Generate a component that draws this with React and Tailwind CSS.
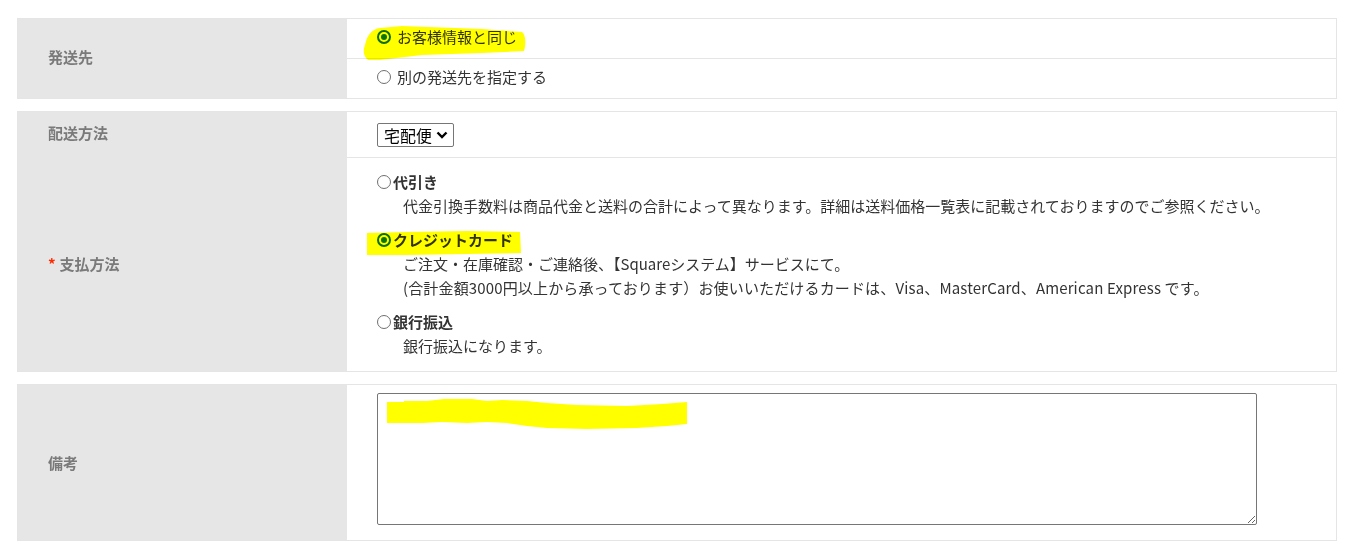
import React from "react";

const font = { fontFamily: '"Noto Sans CJK JP", "Noto Sans", sans-serif' };

function Radio({ checked }) {
  return checked ? (
    <span className="inline-flex h-[14px] w-[14px] shrink-0 items-center justify-center rounded-full border-2 border-[#0b6e0b] bg-[#ffff00]">
      <span className="h-[6px] w-[6px] rounded-full bg-[#0a750a]" />
    </span>
  ) : (
    <span className="inline-block h-[14px] w-[14px] shrink-0 rounded-full border border-[#6f6f6f] bg-white" />
  );
}

function Label({ children, required }) {
  return (
    <div className="flex items-center pl-[30px] text-[15px] font-bold text-[#7a7a7a]">
      {required && <span className="mr-[4px] text-[#ff2a00]">*</span>}
      {children}
    </div>
  );
}

export default function App() {
  return (
    <div className="min-h-[555px] bg-white pt-[18px] text-[15px] leading-[24px] text-[#333]" style={font}>
      <div className="ml-[17px] flex w-[1320px] flex-col gap-[12px]">
        {/* 発送先 */}
        <div className="flex border border-[#e5e5e5]">
          <div className="flex w-[329px] items-center bg-[#e6e6e6] pb-[3px]">
            <Label>発送先</Label>
          </div>
          <div className="relative flex flex-1 flex-col">
            <div className="flex h-[39px] items-center pb-[3px] pl-[30px]">
              <Radio checked />
              <span className="ml-[6px] text-[#333300]">お客様情報と同じ</span>
            </div>
            <div className="flex h-[40px] items-center border-t border-[#e5e5e5] pb-[3px] pl-[30px]">
              <Radio />
              <span className="ml-[6px]">別の発送先を指定する</span>
            </div>
            <svg className="pointer-events-none absolute left-[15px] top-[4px] mix-blend-multiply" width="166" height="40" viewBox="0 0 166 40">
              <path d="M3 22 C5 12 10 6 18 5 L40 3 L120 6 L160 9 C164 12 164 22 162 28 L120 30 L60 32 L18 37 L6 37 C1 33 1 27 3 22 Z" fill="#ffff00" />
            </svg>
          </div>
        </div>

        {/* 配送方法 / 支払方法 */}
        <div className="flex flex-col border border-[#e5e5e5]">
          <div className="flex">
            <div className="flex h-[45px] w-[329px] items-center bg-[#e6e6e6] pb-[4px]">
              <Label>配送方法</Label>
            </div>
            <div className="flex flex-1 items-center pl-[30px]">
              <div className="flex h-[24px] items-center rounded-[2px] border border-[#767676] bg-white pl-[6px] pr-[5px] text-[16px] leading-[20px] text-black">
                宅配便
                <svg className="ml-[4px]" width="12" height="12" viewBox="0 0 12 12">
                  <path d="M1.5 3.5 L6 8 L10.5 3.5" fill="none" stroke="#000" strokeWidth="2.4" />
                </svg>
              </div>
            </div>
          </div>
          <div className="flex">
            <div className="flex w-[329px] items-center bg-[#e6e6e6]">
              <Label required>支払方法</Label>
            </div>
            <div className="relative flex flex-1 flex-col gap-[10px] border-t border-[#e5e5e5] pb-[13px] pl-[30px] pt-[12px]">
              <div>
                <div className="flex items-center">
                  <Radio />
                  <span className="ml-[2px] font-bold">代引き</span>
                </div>
                <div className="pl-[26px]">
                  代金引換手数料は商品代金と送料の合計によって異なります。詳細は送料価格一覧表に記載されておりますのでご参照ください。
                </div>
              </div>
              <div>
                <div className="flex items-center">
                  <Radio checked />
                  <span className="ml-[2px] font-bold text-[#333300]">クレジットカード</span>
                </div>
                <div className="pl-[26px]">
                  <div>ご注文・在庫確認・ご連絡後、【Squareシステム】サービスにて。</div>
                  <div className="tracking-[0.15px]">(合計金額3000円以上から承っております）お使いいただけるカードは、Visa、MasterCard、American Express です。</div>
                </div>
              </div>
              <div>
                <div className="flex items-center">
                  <Radio />
                  <span className="ml-[2px] font-bold">銀行振込</span>
                </div>
                <div className="pl-[26px]">銀行振込になります。</div>
              </div>
              <svg className="pointer-events-none absolute left-[20px] top-[71px] mix-blend-multiply" width="156" height="28" viewBox="0 0 156 28">
                <path d="M0 4 L40 3 L100 2 L153 3 L154 24 L100 25 L40 26 L0 26 Z" fill="#ffff00" />
              </svg>
            </div>
          </div>
        </div>

        {/* 備考 */}
        <div className="flex border border-[#e5e5e5]">
          <div className="flex w-[329px] items-center bg-[#e6e6e6]">
            <Label>備考</Label>
          </div>
          <div className="relative flex-1 pb-[15px] pl-[30px] pt-[8px]">
            <textarea className="block h-[132px] w-[880px] resize rounded-[2px] border border-[#767676] bg-white outline-none" />
            <svg className="pointer-events-none absolute left-[40px] top-[14px] mix-blend-multiply" width="302" height="32" viewBox="0 0 302 32">
              <path d="M0 3 L17 3 L17 2 L40 2 L57 0 L85 0 L100 2 L115 1 L140 2 L160 4 L190 6 L240 7 L275 5 L300 3 L300 25 L280 27 L250 29 L200 30 L160 29 L140 27 L120 24 L100 23 L80 24 L55 23 L35 24 L0 24 Z" fill="#ffff00" />
            </svg>
          </div>
        </div>
      </div>
    </div>
  );
}
